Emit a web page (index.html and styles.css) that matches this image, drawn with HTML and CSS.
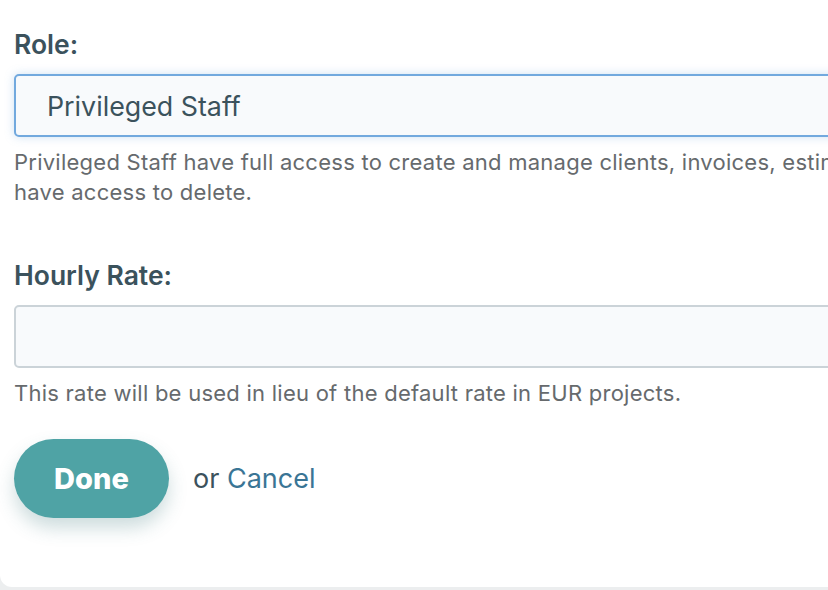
FILE: index.html
```html
<!DOCTYPE html>
<html>
<head>
<meta charset="utf-8">
<link rel="stylesheet" href="styles.css">
</head>
<body>
<div class="card">
  <div class="field">
    <label class="label">Role:</label>
    <div class="input input-focus">Privileged Staff</div>
    <p class="help help-wide">Privileged Staff have full access to create and manage clients, invoices, estimates, projects and expenses but do not<br>have access to delete.</p>
  </div>
  <div class="field field-rate">
    <label class="label">Hourly Rate:</label>
    <div class="input"></div>
    <p class="help">This rate will be used in lieu of the default rate in EUR projects.</p>
  </div>
  <div class="actions">
    <button class="btn-done">Done</button>
    <span class="or">or <a class="cancel">Cancel</a></span>
  </div>
</div>
</body>
</html>
```
FILE: styles.css
```css
html, body {
  margin: 0;
  padding: 0;
  overflow: hidden;
  background: #eceeef;
  font-family: Inter, "Noto Sans", sans-serif;
}
.card {
  width: 1300px;
  height: 587px;
  box-sizing: border-box;
  background: #fff;
  border-bottom-left-radius: 12px;
  padding: 26px 0 0 14px;
}
.field {
  display: flex;
  flex-direction: column;
}
.label {
  font-size: 26.5px;
  font-weight: 600;
  color: #3b525c;
  line-height: 36px;
  margin-bottom: 12px;
}
.input {
  height: 63px;
  box-sizing: border-box;
  width: 1200px;
  border: 2px solid #cbd3d8;
  border-radius: 5px;
  background: #f8fafc;
  font-size: 26.8px;
  color: #3b525c;
  padding-left: 31px;
  display: flex;
  align-items: center;
}
.input-focus {
  border-color: #72a9de;
  box-shadow: 0 0 10px rgba(114, 169, 222, 0.35);
}
.help {
  margin: 10px 0 0;
  font-size: 22px;
  letter-spacing: 0.25px;
  line-height: 30px;
  color: #666a6d;
}
.help-wide {
  white-space: nowrap;
}
.field-rate {
  margin-top: 50px;
}
.actions {
  display: flex;
  align-items: center;
  margin-top: 31px;
}
.btn-done {
  width: 155px;
  height: 79px;
  border: none;
  border-radius: 40px;
  background: #4fa3a5;
  color: #fff;
  font-family: inherit;
  font-size: 29px;
  font-weight: 800;
  box-shadow: 0 10px 18px rgba(60, 120, 125, 0.25);
}
.or {
  margin-left: 24px;
  font-size: 27px;
  color: #3b525c;
}
.cancel {
  color: #3a7595;
}
```
